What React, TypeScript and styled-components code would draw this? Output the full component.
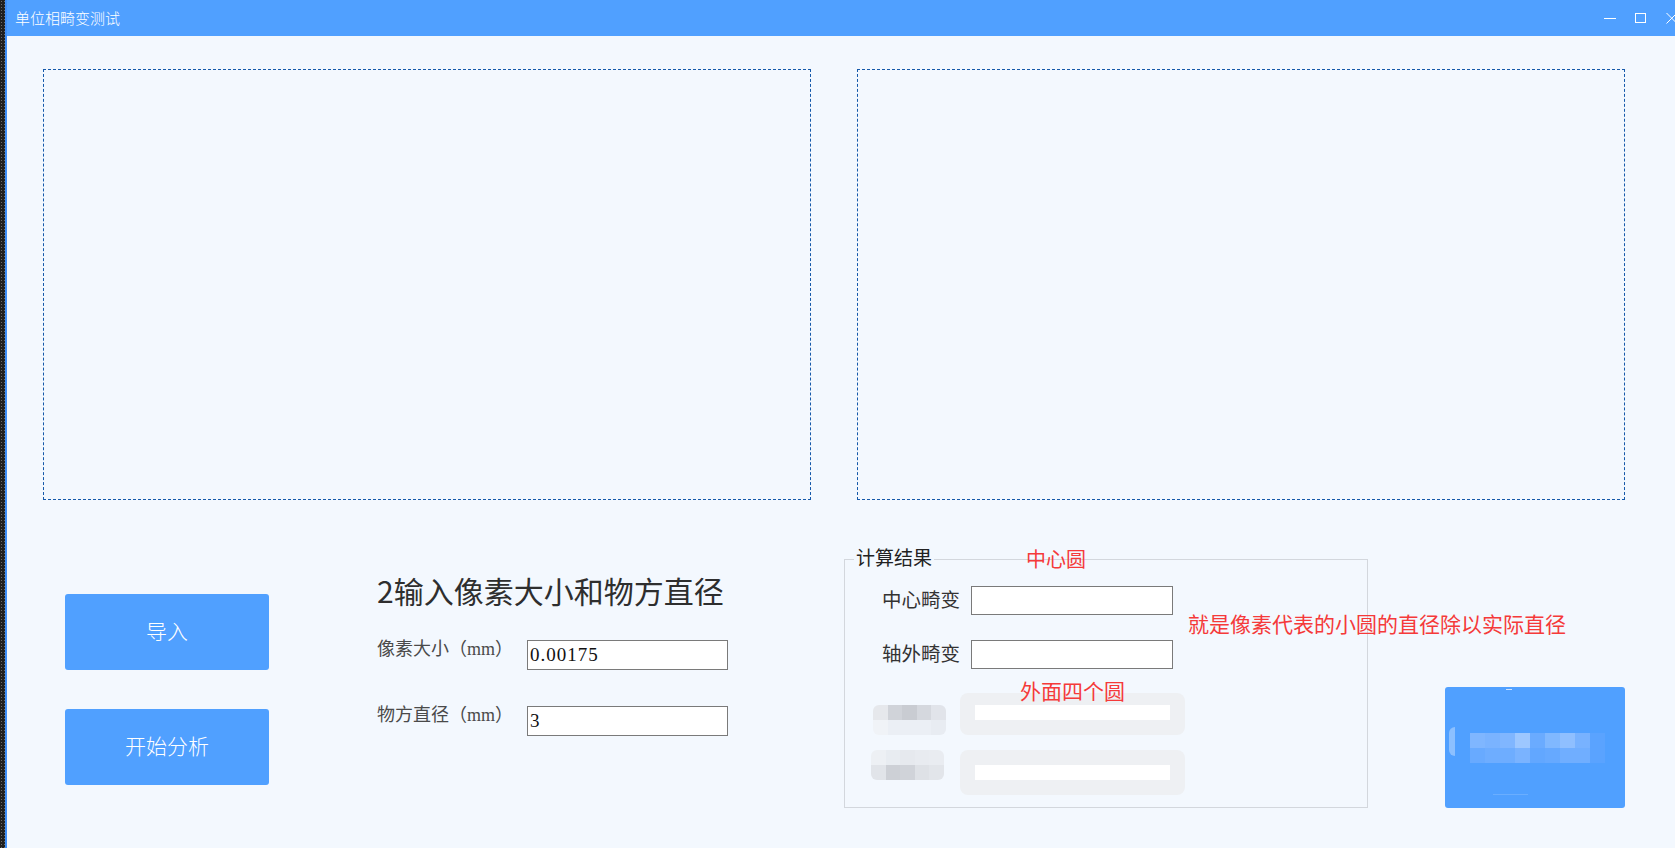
import React from 'react';
import styled, { createGlobalStyle } from 'styled-components';

const GlobalStyle = createGlobalStyle`
  html, body {
    margin: 0;
    padding: 0;
    width: 1675px;
    height: 848px;
    overflow: hidden;
    background: #f3f8fe;
  }
  * { box-sizing: border-box; }
`;

const SANS = '"Noto Sans CJK SC", "Noto Sans", sans-serif';
const SERIF = '"Liberation Serif", "Noto Sans CJK SC", serif';

const Screen = styled.div`
  display: flex;
  width: 1675px;
  height: 848px;
  overflow: hidden;
`;

// the neighbouring dark window edge on the left
const DesktopEdge = styled.div`
  width: 5px;
  flex: none;
  background-color: #202020;
  background-image: radial-gradient(#6b6b6b 0.6px, transparent 0.8px);
  background-size: 3px 3px;
`;

const Window = styled.div`
  flex: 1;
  display: flex;
  flex-direction: column;
  border-left: 2px solid #3f8ff8;
  background: #f3f8fe;
  overflow: hidden;
`;

const TitleBar = styled.div`
  height: 36px;
  flex: none;
  display: flex;
  align-items: center;
  padding-left: 8px;
  background: #50a0ff;
`;

const Title = styled.div`
  font-family: ${SANS};
  font-size: 15px;
  font-weight: 300;
  color: #ffffff;
  line-height: 20px;
`;

const Controls = styled.div`
  margin-left: auto;
  margin-right: -3px;
  display: flex;
  align-items: center;
  gap: 19px;
`;

const Body = styled.div`
  flex: 1;
  padding: 33px 0 0 36px;
`;

const PreviewRow = styled.div`
  display: flex;
  gap: 46px;
`;

const Preview = styled.div`
  width: 768px;
  height: 431px;
  border: 1px dashed #1559aa;
`;

const BottomArea = styled.div`
  position: relative;
  display: flex;
  align-items: flex-start;
  padding-left: 22px;
`;

const ButtonCol = styled.div`
  width: 204px;
  margin-top: 94px;
  display: flex;
  flex-direction: column;
  gap: 39px;
`;

const ActionButton = styled.button`
  height: 76px;
  border: none;
  border-radius: 3px;
  background: #50a0ff;
  color: #ffffff;
  font-family: ${SANS};
  font-size: 21px;
  font-weight: 300;
  padding: 0 0 4px 0;
  cursor: pointer;
`;

const ParamCol = styled.div`
  width: 351px;
  margin-left: 108px;
  margin-top: 70px;
  display: flex;
  flex-direction: column;
`;

const Heading = styled.div`
  font-family: ${SANS};
  font-size: 30px;
  line-height: 40px;
  color: #2e2e2e;
  white-space: nowrap;
`;

const ParamRow = styled.div<{ $gap: number }>`
  display: flex;
  align-items: flex-start;
  margin-top: ${(p) => p.$gap}px;
`;

const ParamLabel = styled.div`
  width: 150px;
  font-family: ${SERIF};
  font-size: 18px;
  line-height: 18px;
  color: #4a4a4a;
  white-space: nowrap;
`;

const TextBox = styled.div<{ $w: number; $h: number }>`
  width: ${(p) => p.$w}px;
  height: ${(p) => p.$h}px;
  border: 1px solid #7a7a7a;
  background: #ffffff;
  font-family: "Liberation Serif", serif;
  font-size: 19px;
  letter-spacing: 1px;
  line-height: ${(p) => p.$h - 2}px;
  padding-left: 2px;
  color: #111;
`;

const ResultBox = styled.fieldset`
  width: 524px;
  margin: 47px 0 0 116px;
  padding: 15px 0 12px 0;
  border: 1px solid #d3d7dd;
  min-inline-size: 0;
`;

const Legend = styled.legend`
  margin-left: 9px;
  padding: 0 2px;
  font-family: ${SERIF};
  font-size: 19px;
  line-height: 24px;
  color: #222;
`;

const ResultRow = styled.div<{ $gap: number }>`
  display: flex;
  align-items: center;
  gap: 11px;
  margin-top: ${(p) => p.$gap}px;
`;

const ResultLabel = styled.div`
  width: 115px;
  text-align: right;
  font-family: ${SERIF};
  font-size: 19.5px;
  line-height: 24px;
  color: #333;
`;

const BlurRow = styled.div<{ $gap: number; $h: number }>`
  display: flex;
  align-items: flex-start;
  height: ${(p) => p.$h}px;
  margin-top: ${(p) => p.$gap}px;
`;

const Mosaic = styled.div<{ $left: number; $top: number }>`
  margin-left: ${(p) => p.$left}px;
  margin-top: ${(p) => p.$top}px;
  display: grid;
  grid-template-columns: repeat(5, 14.6px);
  grid-auto-rows: 15px;
  border-radius: 6px;
  overflow: hidden;
`;

const Cell = styled.div<{ $c: string }>`
  background: ${(p) => p.$c};
`;

const BlurField = styled.div<{ $left: number; $h: number; $bar: number }>`
  margin-left: ${(p) => p.$left}px;
  width: 225px;
  height: ${(p) => p.$h}px;
  background: #eef0f3;
  border-radius: 8px;
  padding: ${(p) => p.$bar}px 15px 0 15px;
  &::after {
    content: "";
    display: block;
    height: 15px;
    background: #ffffff;
  }
`;

const BlurButton = styled.div`
  position: relative;
  width: 180px;
  height: 121px;
  margin: 187px 0 0 77px;
  background: #50a0ff;
  border-radius: 3px;
  display: flex;
  align-items: center;
  padding: 0 0 0 25px;
`;

const BtnMosaic = styled.div`
  display: grid;
  grid-template-columns: repeat(9, 15px);
  grid-auto-rows: 15px;
`;

const BtnTick = styled.div`
  position: absolute;
  top: 2px;
  left: 61px;
  width: 6px;
  height: 1px;
  background: #cfe3ff;
`;

const BtnFoot = styled.div`
  position: absolute;
  bottom: 13px;
  left: 48px;
  width: 35px;
  height: 1px;
  background: #6aaeff;
`;

const BtnNotch = styled.div`
  position: absolute;
  left: 4px;
  top: 40px;
  width: 6px;
  height: 29px;
  border-radius: 6px 0 0 6px;
  background: #8cc0ff;
`;

const Note = styled.div<{ $x: number; $y: number; $size: number }>`
  position: absolute;
  left: ${(p) => p.$x}px;
  top: ${(p) => p.$y}px;
  font-family: ${SANS};
  font-size: ${(p) => p.$size}px;
  line-height: 24px;
  color: #f53a3a;
  white-space: nowrap;
`;

const labelMosaic1 = [
  '#e6e8ec', '#d0d3d9', '#c9ccd2', '#d5d8de', '#e1e4ea',
  '#f0f3f7', '#ebeff5', '#ebeff5', '#ebeff5', '#e8ecf2',
];
const labelMosaic2 = [
  '#edf0f4', '#e8ecf1', '#e6e9ee', '#e8ebf0', '#e9ecf1',
  '#e1e4e9', '#cdd0d6', '#d0d3d9', '#dee1e6', '#e2e5ea',
];
const btnMosaic = [
  '#7fb6ff', '#7ab3ff', '#80b6ff', '#9dc7ff', '#6aabff', '#80b8ff', '#8fbfff', '#78b2ff', '#5aa3ff',
  '#68aaff', '#6eadff', '#6eadff', '#7ab3ff', '#62a7ff', '#66a9ff', '#70aeff', '#70aeff', '#5aa3ff',
];

const MinIcon = () => (
  <svg width="12" height="12" viewBox="0 0 12 12">
    <line x1="0" y1="6.5" x2="12" y2="6.5" stroke="#fff" strokeWidth="1" />
  </svg>
);

const MaxIcon = () => (
  <svg width="12" height="12" viewBox="0 0 12 12">
    <rect x="0.5" y="1.5" width="10" height="9" fill="none" stroke="#fff" strokeWidth="1" />
  </svg>
);

const CloseIcon = () => (
  <svg width="12" height="12" viewBox="0 0 12 12">
    <path d="M0.5 1 L11 11.5 M11 1 L0.5 11.5" stroke="#fff" strokeWidth="1" fill="none" />
  </svg>
);

export default function App() {
  return (
    <>
      <GlobalStyle />
      <Screen>
        <DesktopEdge />
        <Window>
          <TitleBar>
            <Title>单位相畸变测试</Title>
            <Controls>
              <MinIcon />
              <MaxIcon />
              <CloseIcon />
            </Controls>
          </TitleBar>
          <Body>
            <PreviewRow>
              <Preview />
              <Preview />
            </PreviewRow>
            <BottomArea>
              <ButtonCol>
                <ActionButton>导入</ActionButton>
                <ActionButton>开始分析</ActionButton>
              </ButtonCol>
              <ParamCol>
                <Heading>2输入像素大小和物方直径</Heading>
                <ParamRow $gap={30}>
                  <ParamLabel>像素大小（mm）</ParamLabel>
                  <TextBox $w={201} $h={30}>0.00175</TextBox>
                </ParamRow>
                <ParamRow $gap={36}>
                  <ParamLabel>物方直径（mm）</ParamLabel>
                  <TextBox $w={201} $h={30}>3</TextBox>
                </ParamRow>
              </ParamCol>
              <ResultBox>
                <Legend>计算结果</Legend>
                <ResultRow $gap={0}>
                  <ResultLabel>中心畸变</ResultLabel>
                  <TextBox $w={202} $h={29} />
                </ResultRow>
                <ResultRow $gap={25}>
                  <ResultLabel>轴外畸变</ResultLabel>
                  <TextBox $w={202} $h={29} />
                </ResultRow>
                <BlurRow $gap={24} $h={42}>
                  <Mosaic $left={28} $top={12}>
                    {labelMosaic1.map((c, i) => (
                      <Cell key={i} $c={c} />
                    ))}
                  </Mosaic>
                  <BlurField $left={14} $h={42} $bar={12} />
                </BlurRow>
                <BlurRow $gap={15} $h={45}>
                  <Mosaic $left={26} $top={0}>
                    {labelMosaic2.map((c, i) => (
                      <Cell key={i} $c={c} />
                    ))}
                  </Mosaic>
                  <BlurField $left={16} $h={45} $bar={15} />
                </BlurRow>
              </ResultBox>
              <BlurButton>
                <BtnTick />
                <BtnNotch />
                <BtnMosaic>
                  {btnMosaic.map((c, i) => (
                    <Cell key={i} $c={c} />
                  ))}
                </BtnMosaic>
                <BtnFoot />
              </BlurButton>
              <Note $x={983} $y={47} $size={20}>中心圆</Note>
              <Note $x={1145} $y={111} $size={21}>就是像素代表的小圆的直径除以实际直径</Note>
              <Note $x={977} $y={178} $size={21}>外面四个圆</Note>
            </BottomArea>
          </Body>
        </Window>
      </Screen>
    </>
  );
}
